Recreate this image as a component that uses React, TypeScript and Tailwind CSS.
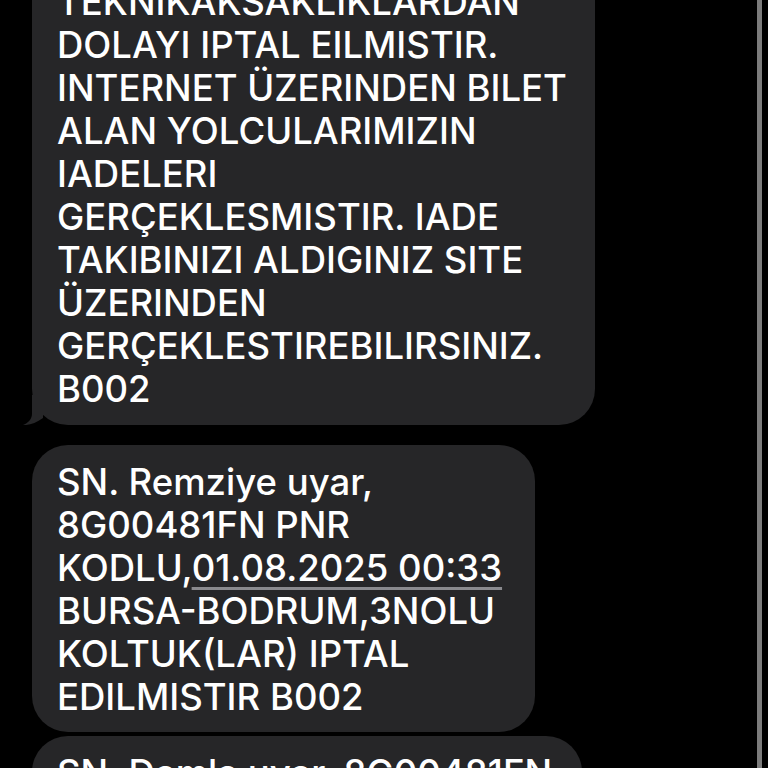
export default function App() {
  const first = [
    "TEKNIKAKSAKLIKLARDAN",
    "DOLAYI IPTAL EILMISTIR.",
    "INTERNET ÜZERINDEN BILET",
    "ALAN YOLCULARIMIZIN",
    "IADELERI",
    "GERÇEKLESMISTIR. IADE",
    "TAKIBINIZI ALDIGINIZ SITE",
    "ÜZERINDEN",
    "GERÇEKLESTIREBILIRSINIZ.",
    "B002",
  ];

  return (
    <div
      className="w-full h-[768px] overflow-hidden bg-black flex text-white text-[36.5px] font-medium leading-[43px]"
      style={{ fontFamily: "Inter, 'Liberation Sans', sans-serif" }}
    >
      <div className="flex-1 flex flex-col items-start pl-[32px]">
        {/* message with tail */}
        <div className="relative mt-[-35px] w-[563px] rounded-[36px] bg-[#262628] pl-[25px] pr-4 pt-4 pb-[14px]">
          {first.map((line) => (
            <div key={line} className="whitespace-nowrap">
              {line}
            </div>
          ))}
          <svg
            className="absolute left-[-10px] bottom-0"
            width="30"
            height="30"
            viewBox="0 0 30 30"
          >
            <path d="M10 0 L10 19 C10 24 6 28 1 30 C7 30.5 14 28 21 23 L21 0 Z" fill="#262628" />
          </svg>
        </div>

        <div className="mt-5 w-[503px] rounded-[36px] bg-[#262628] pl-[25px] pr-4 pt-4 pb-[13px]">
          <div className="whitespace-nowrap">SN. Remziye uyar,</div>
          <div className="whitespace-nowrap">8G00481FN PNR</div>
          <div className="whitespace-nowrap">
            KODLU,
            <span className="underline decoration-[#8a8a8e] decoration-[3px] underline-offset-[6px]">
              01.08.2025 00:33
            </span>
          </div>
          <div className="whitespace-nowrap">BURSA-BODRUM,3NOLU</div>
          <div className="whitespace-nowrap">KOLTUK(LAR) IPTAL</div>
          <div className="whitespace-nowrap">EDILMISTIR B002</div>
        </div>

        <div className="mt-1 w-[550px] rounded-[36px] bg-[#262628] pl-[25px] pr-4 pt-4 pb-[13px]">
          <div className="whitespace-nowrap">SN. Damla uyar, 8G00481FN</div>
          <div className="whitespace-nowrap">PNR</div>
        </div>
      </div>

      <div className="w-[5px] h-full bg-[#7c7c7c] mr-[6px]" />
    </div>
  );
}
